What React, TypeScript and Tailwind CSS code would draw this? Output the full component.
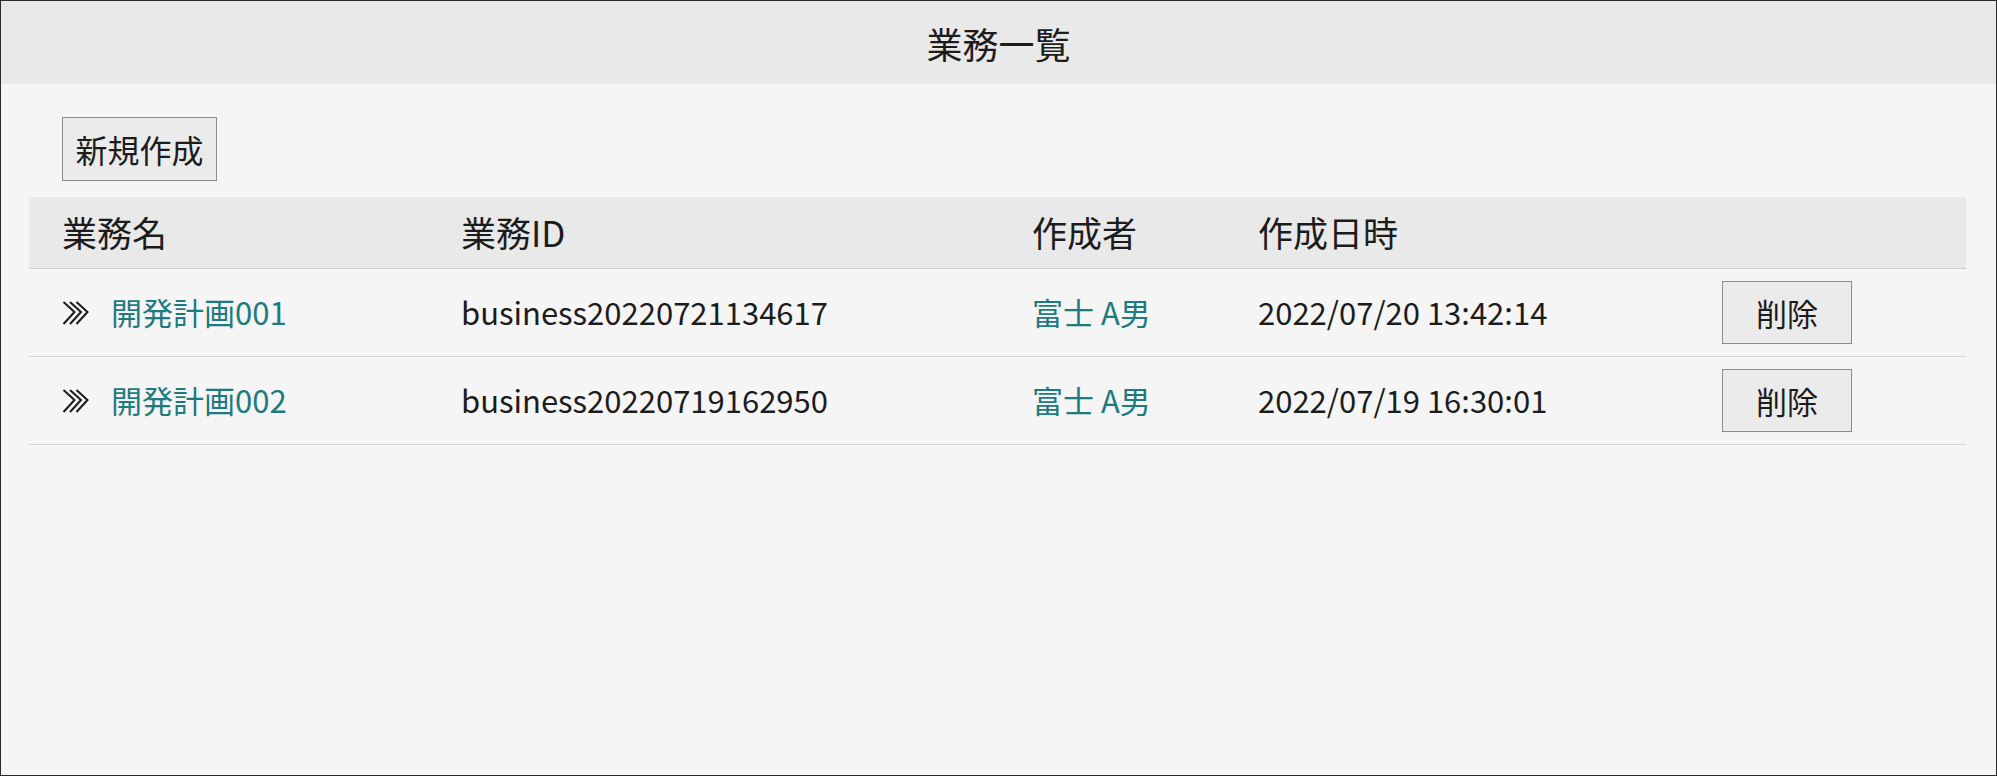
import React from "react";

const CJK = "font-['Noto_Sans_CJK_JP','Noto_Sans',sans-serif]";

function Chevrons() {
  return (
    <svg width="27" height="26" viewBox="0 0 27 26" className="shrink-0">
      {[0, 6.5, 13].map((o) => (
        <polyline
          key={o}
          points={`${o + 1.5},2 ${o + 12.5},12 ${o + 1.5},24`}
          fill="none"
          stroke="#1a1a1a"
          strokeWidth="2"
          strokeLinejoin="miter"
        />
      ))}
    </svg>
  );
}

const rows = [
  {
    name: "開発計画001",
    id: "business20220721134617",
    author: "富士 A男",
    date: "2022/07/20 13:42:14",
  },
  {
    name: "開発計画002",
    id: "business20220719162950",
    author: "富士 A男",
    date: "2022/07/19 16:30:01",
  },
];

export default function App() {
  return (
    <div
      className={`${CJK} h-[776px] w-full border border-[#2a2a2a] bg-[#f5f5f5] text-[#1c1c1c] flex flex-col`}
    >
      <div className="h-[83px] bg-[#e9e9e9] flex items-center justify-center text-[36px] leading-none">
        業務一覧
      </div>
      <div className="pl-[28px] pr-[30px] pt-[33px]">
        <button className="ml-[33px] h-[64px] w-[155px] border border-[#8c8c8c] bg-[#ebebeb] text-[32px] leading-none text-[#1c1c1c]">
          新規作成
        </button>
        <div className="mt-[16px] grid grid-cols-[432px_571px_226px_464px_1fr]">
          <div className="contents text-[35px]">
            <div className="h-[72px] bg-[#e9e9e9] border-b border-[#cdcdcd] pl-[33px] flex items-center">業務名</div>
            <div className="h-[72px] bg-[#e9e9e9] border-b border-[#cdcdcd] flex items-center">業務ID</div>
            <div className="h-[72px] bg-[#e9e9e9] border-b border-[#cdcdcd] flex items-center">作成者</div>
            <div className="h-[72px] bg-[#e9e9e9] border-b border-[#cdcdcd] flex items-center">作成日時</div>
            <div className="h-[72px] bg-[#e9e9e9] border-b border-[#cdcdcd]"></div>
          </div>
          {rows.map((r) => (
            <div key={r.id} className="contents text-[31px]">
              <div className="h-[88px] border-b border-[#d4d4d4] pl-[33px] flex items-center gap-[22px]">
                <Chevrons />
                <span className="text-[#1d7b7e]">{r.name}</span>
              </div>
              <div className="h-[88px] border-b border-[#d4d4d4] flex items-center">{r.id}</div>
              <div className="h-[88px] border-b border-[#d4d4d4] flex items-center text-[#1d7b7e]">{r.author}</div>
              <div className="h-[88px] border-b border-[#d4d4d4] flex items-center">{r.date}</div>
              <div className="h-[88px] border-b border-[#d4d4d4] flex items-center">
                <button className="h-[63px] w-[130px] border border-[#8c8c8c] bg-[#ebebeb] text-[31px] leading-none text-[#1c1c1c]">
                  削除
                </button>
              </div>
            </div>
          ))}
        </div>
      </div>
    </div>
  );
}
